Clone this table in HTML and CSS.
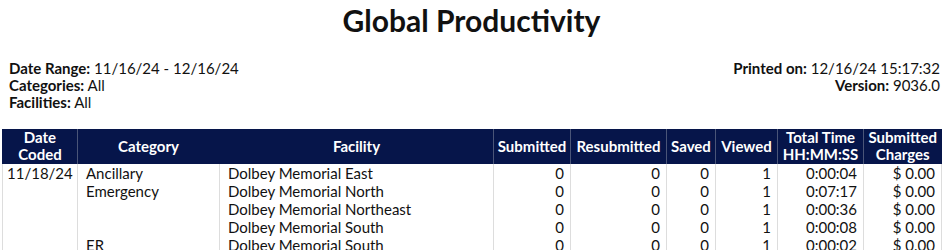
FILE: index.html
```html
<!DOCTYPE html>
<html lang="en">
<head>
    <meta charset="UTF-8">
    <title>Global Productivity</title>
    <link rel="stylesheet" href="styles.css">
</head>
<body>
    <h1 class="title">Global Productivity</h1>

    <div class="info">
        <div class="info-left">
            <div><b>Date Range:</b> 11/16/24 - 12/16/24</div>
            <div><b>Categories:</b> All</div>
            <div><b>Facilities:</b> All</div>
        </div>
        <div class="info-right">
            <div><b>Printed on:</b> 12/16/24 15:17:32</div>
            <div><b>Version:</b> 9036.0</div>
        </div>
    </div>

    <table class="report">
        <colgroup>
            <col class="c-date">
            <col class="c-cat">
            <col class="c-fac">
            <col class="c-sub">
            <col class="c-resub">
            <col class="c-saved">
            <col class="c-viewed">
            <col class="c-time">
            <col class="c-charges">
        </colgroup>
        <thead>
            <tr>
                <th class="no-line">Date<br>Coded</th>
                <th>Category</th>
                <th class="no-line">Facility</th>
                <th>Submitted</th>
                <th>Resubmitted</th>
                <th>Saved</th>
                <th>Viewed</th>
                <th>Total Time<br>HH:MM:SS</th>
                <th>Submitted<br>Charges</th>
            </tr>
        </thead>
        <tbody>
            <tr>
                <td class="date">11/18/24</td>
                <td>Ancillary</td>
                <td>Dolbey Memorial East</td>
                <td class="num">0</td>
                <td class="num">0</td>
                <td class="num">0</td>
                <td class="num">1</td>
                <td class="num">0:00:04</td>
                <td class="num">$ 0.00</td>
            </tr>
            <tr>
                <td class="date"></td>
                <td>Emergency</td>
                <td>Dolbey Memorial North</td>
                <td class="num">0</td>
                <td class="num">0</td>
                <td class="num">0</td>
                <td class="num">1</td>
                <td class="num">0:07:17</td>
                <td class="num">$ 0.00</td>
            </tr>
            <tr>
                <td class="date"></td>
                <td></td>
                <td>Dolbey Memorial Northeast</td>
                <td class="num">0</td>
                <td class="num">0</td>
                <td class="num">0</td>
                <td class="num">1</td>
                <td class="num">0:00:36</td>
                <td class="num">$ 0.00</td>
            </tr>
            <tr>
                <td class="date"></td>
                <td></td>
                <td>Dolbey Memorial South</td>
                <td class="num">0</td>
                <td class="num">0</td>
                <td class="num">0</td>
                <td class="num">1</td>
                <td class="num">0:00:08</td>
                <td class="num">$ 0.00</td>
            </tr>
            <tr>
                <td class="date"></td>
                <td>ER</td>
                <td>Dolbey Memorial South</td>
                <td class="num">0</td>
                <td class="num">0</td>
                <td class="num">0</td>
                <td class="num">1</td>
                <td class="num">0:00:02</td>
                <td class="num">$ 0.00</td>
            </tr>
        </tbody>
    </table>
</body>
</html>
```

FILE: styles.css
```css
body {
    font-family: Lato, "Liberation Sans", sans-serif;
    font-size: 15px;
    color: #111;
    background-color: #fff;
    margin: 0;
    padding: 0 5px 0 2px;
}
.title {
    text-align: center;
    font-size: 30px;
    font-weight: bold;
    margin: 0;
    padding-top: 2px;
    line-height: 36px;
}
.info {
    display: flex;
    justify-content: space-between;
    margin-top: 22px;
    padding: 0 1px 0 7px;
    line-height: 17px;
}
.info-right {
    text-align: right;
}
.report {
    width: 939px;
    margin-top: 18px;
    border-collapse: collapse;
    table-layout: fixed;
}
.c-date { width: 75px; }
.c-cat { width: 142px; }
.c-fac { width: 274px; }
.c-sub { width: 77px; }
.c-resub { width: 96px; }
.c-saved { width: 49px; }
.c-viewed { width: 62px; }
.c-time { width: 86px; }
.c-charges { width: 78px; }
.report th {
    background-color: #06154a;
    color: #fff;
    font-weight: bold;
    line-height: 17px;
    padding: 0 0 1px;
    text-align: center;
    border-left: 1px solid #4a5578;
    white-space: nowrap;
}
.report th.no-line {
    border-left-color: #06154a;
}
.report td {
    line-height: 18px;
    padding: 0 6px 0 8px;
    border-left: 1px solid #ddd;
    border-right: 1px solid #ddd;
    white-space: nowrap;
}
.report td.date {
    padding-left: 4px;
}
.report td.num {
    text-align: right;
}
```
